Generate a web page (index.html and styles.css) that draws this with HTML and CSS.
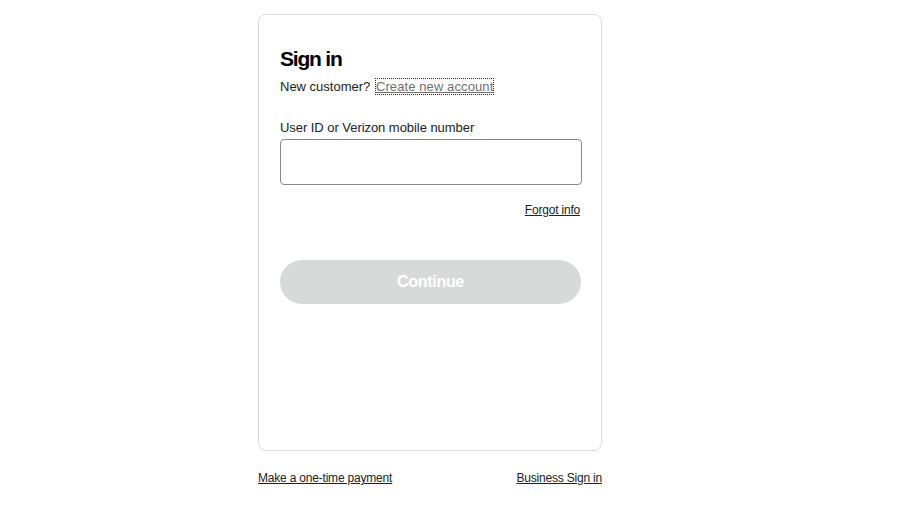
FILE: index.html
```html
<!DOCTYPE html>
<html lang="en">
<head>
    <meta charset="UTF-8">
    <meta name="viewport" content="width=device-width, initial-scale=1.0">
    <title>Sign in</title>
    <link rel="stylesheet" href="styles.css">
</head>
<body>
    <div class="page">
        <div class="card">
            <h1>Sign in</h1>
            <p class="new-customer">New customer? <a href="#" class="create-link">Create new account</a></p>

            <form class="signin-form">
                <label for="userid">User ID or Verizon mobile number</label>
                <input type="text" id="userid">
                <div class="forgot-row">
                    <a href="#" class="small-link">Forgot info</a>
                </div>
                <button type="submit" disabled>Continue</button>
            </form>
        </div>

        <div class="footer-links">
            <a href="#" class="small-link">Make a one-time payment</a>
            <a href="#" class="small-link">Business Sign in</a>
        </div>
    </div>
</body>
</html>
```

FILE: styles.css
```css
body {
    margin: 0;
    font-family: "Liberation Sans", Arial, sans-serif;
    color: #000;
    background: #fff;
}
.page {
    width: 344px;
    margin-left: 258px;
    padding-top: 14px;
}
.card {
    box-sizing: border-box;
    height: 437px;
    border: 1px solid #dcdcdc;
    border-radius: 8px;
    padding: 32px 20px 0 21px;
}
h1 {
    margin: 0;
    font-size: 21px;
    line-height: 24px;
    font-weight: bold;
    letter-spacing: -1.2px;
}
.new-customer {
    margin: 8px 0 0;
    font-size: 13px;
    line-height: 16px;
    color: #222;
}
.create-link {
    margin-left: 2px;
    color: #6f7171;
    letter-spacing: 0.1px;
    outline: 1px dotted #333;
    outline-offset: 0;
}
.signin-form {
    margin-top: 25px;
    display: flex;
    flex-direction: column;
}
label {
    font-size: 13px;
    line-height: 16px;
    margin-bottom: 3px;
    letter-spacing: -0.05px;
    color: #222;
}
input {
    box-sizing: border-box;
    width: 302px;
    height: 46px;
    border: 1px solid #8a8a8a;
    border-radius: 4px;
    padding: 0 10px;
    font-size: 14px;
}
.forgot-row {
    display: flex;
    justify-content: flex-end;
    margin-top: 17px;
    padding-right: 1px;
}
.small-link {
    font-size: 12px;
    line-height: 16px;
    letter-spacing: -0.2px;
    color: #222;
}
button {
    margin-top: 42px;
    width: 301px;
    height: 44px;
    border: none;
    border-radius: 22px;
    background: #d8dada;
    color: #fff;
    font-family: "Liberation Sans", Arial, sans-serif;
    font-size: 16px;
    font-weight: bold;
    letter-spacing: -0.3px;
}
.footer-links {
    display: flex;
    justify-content: space-between;
    margin-top: 19px;
}
```
